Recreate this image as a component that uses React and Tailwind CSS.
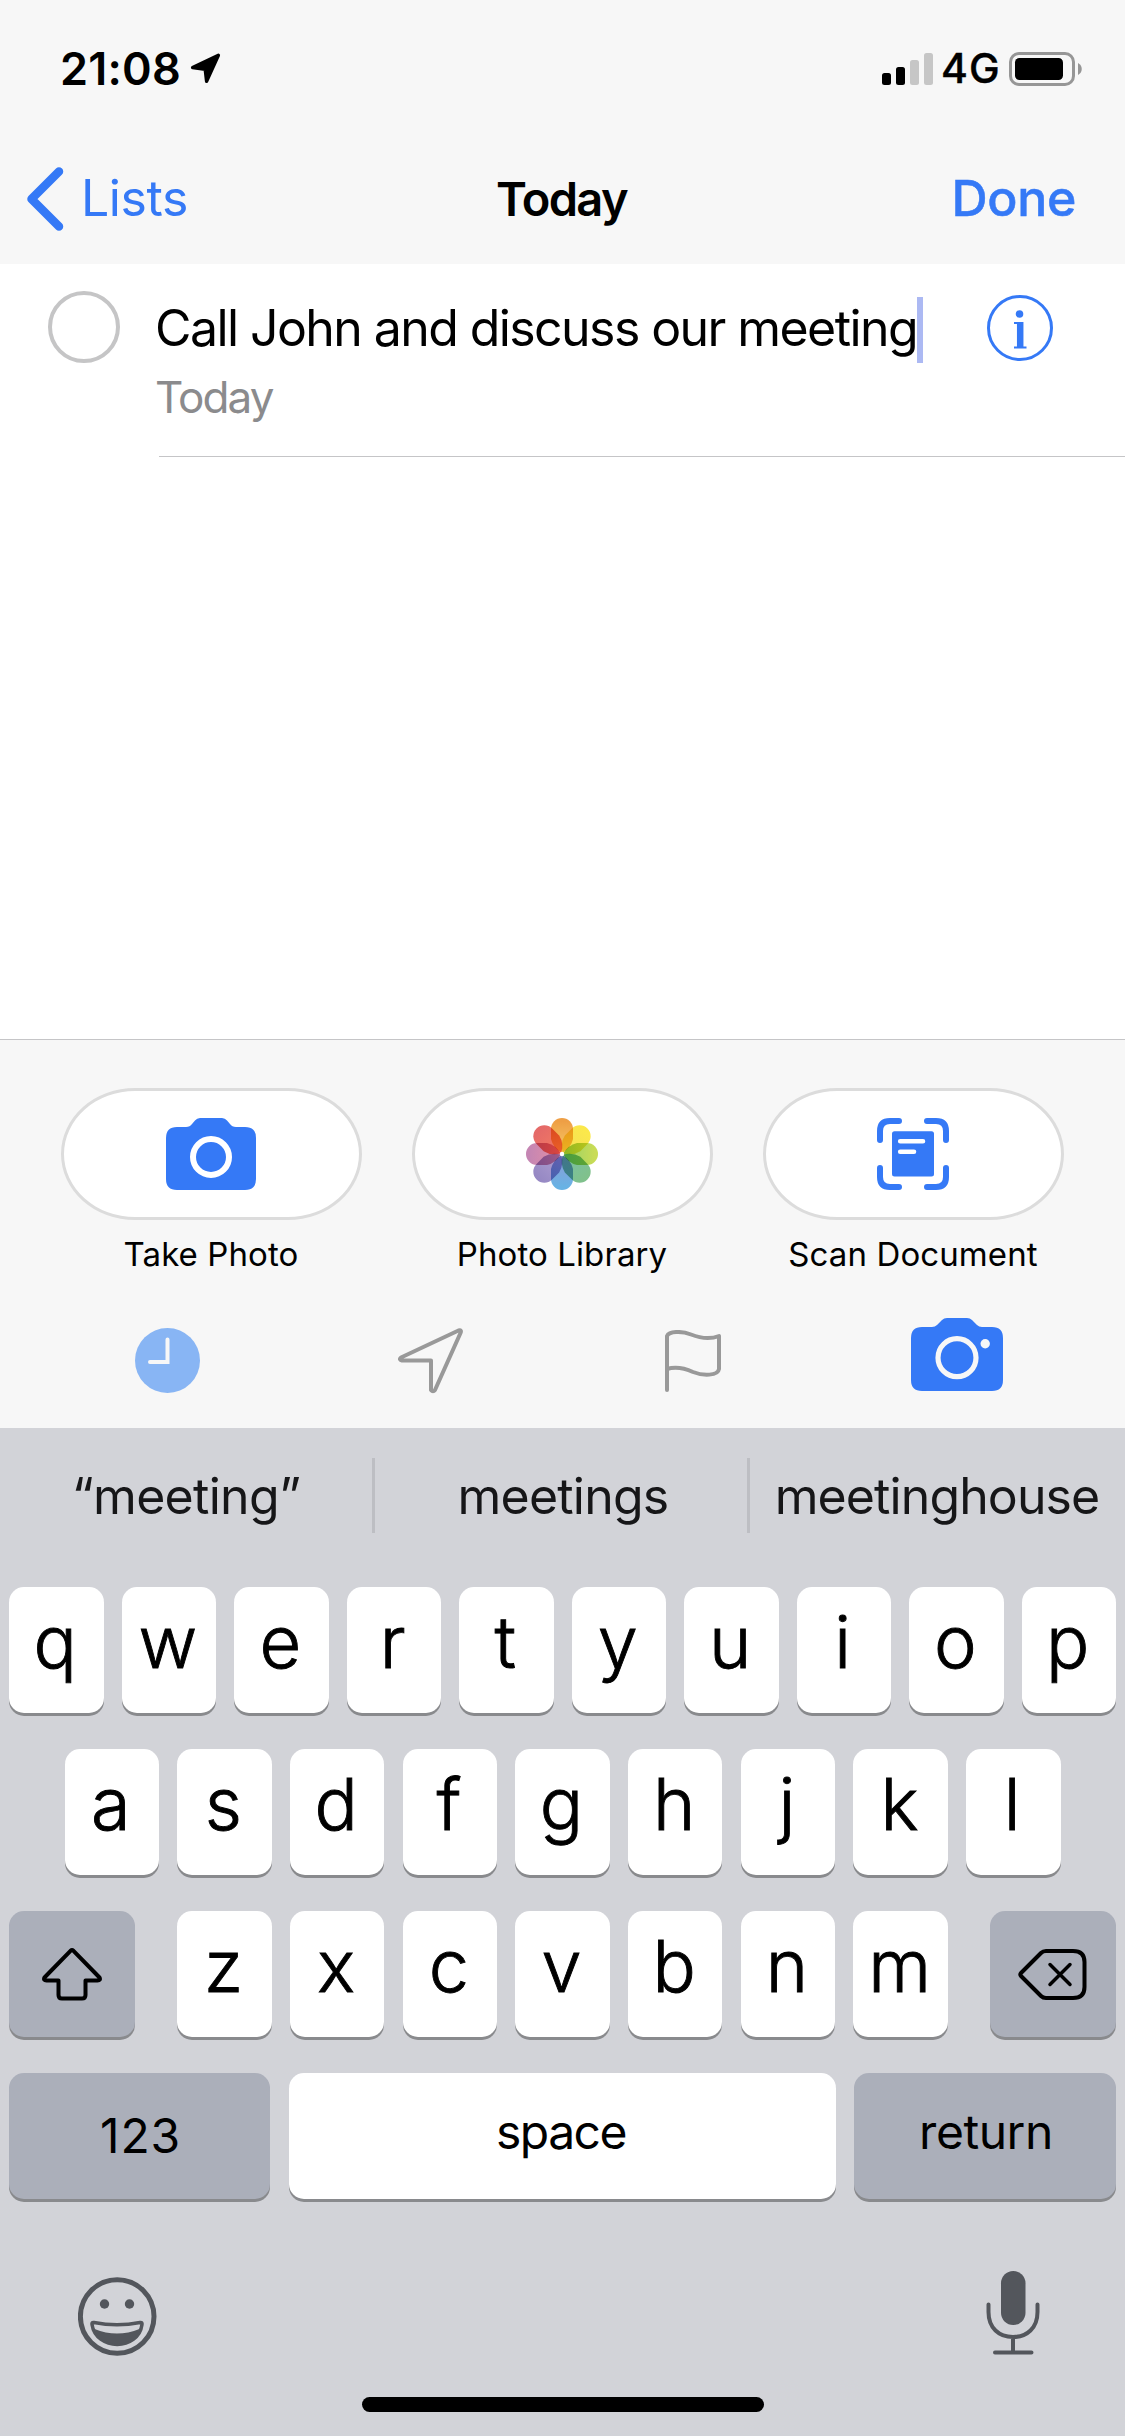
import React from "react";

const PETALS = [
  ["#ee9f45", "#f7cc68"],
  ["#fbe84b", "#f2e058"],
  ["#c9dc56", "#94d068"],
  ["#80c18c", "#78c0a8"],
  ["#68b2e4", "#929ad6"],
  ["#9789c4", "#b0a0d2"],
  ["#c586b3", "#e690a4"],
  ["#e56a68", "#f47c62"],
];

function StatusBar() {
  return (
    <div className="flex h-[132px] items-start">
      <span className="mt-[46px] ml-[60px] w-[120px] text-[45px] leading-none font-semibold tracking-[0.2px]">21:08</span>
      <svg className="mt-[53px] ml-[10px] h-[31px] w-[31px]" viewBox="0 0 31 31">
        <path d="M28.4 2.2 L2.6 14.6 L15.2 16.4 L16.6 28.4 Z" stroke="#000" strokeWidth="3.4" strokeLinejoin="round" />
      </svg>
      <svg className="mt-[53px] ml-auto h-[32px] w-[51px]" viewBox="0 0 51 32">
        <rect x="0" y="20" width="9" height="12" rx="2.5" />
        <rect x="14" y="14" width="9" height="18" rx="2.5" />
        <rect x="28" y="7" width="9" height="25" rx="2.5" fill="#c6c6c6" />
        <rect x="42" y="0" width="9" height="32" rx="2.5" fill="#c6c6c6" />
      </svg>
      <span className="mt-[48px] ml-[8px] w-[59px] text-[41px] leading-none font-medium tracking-[1px] [-webkit-text-stroke:0.4px_#000]">4G</span>
      <svg className="mt-[52px] mr-[43px] ml-[9px] h-[34px] w-[73px]" viewBox="0 0 73 34">
        <rect x="1.5" y="1.5" width="63" height="31" rx="8.5" fill="none" stroke="#969696" strokeWidth="3" />
        <rect x="6" y="6" width="48" height="22" rx="4.5" />
        <path d="M69 11 C74 13.5 74 20.500 69 23 Z" fill="#969696" />
      </svg>
    </div>
  );
}

function NavBar() {
  return (
    <div className="flex h-[132px] items-start">
      <svg className="mt-[34px] ml-[25px] h-[66px] w-[40px]" viewBox="0 0 40 66" fill="none" stroke="#3579f6" strokeWidth="8.500" strokeLinecap="round" strokeLinejoin="round">
        <path d="M34 5.500 L6.500 33 L34 60.500" />
      </svg>
      <span className="mt-[41px] ml-[16px] w-[200px] text-[50px] leading-none tracking-[-0.4px] text-[#3579f6]">Lists</span>
      <span className="mt-[43px] ml-[215px] text-[47px] leading-none font-semibold tracking-[-1.65px]">Today</span>
      <span className="mt-[41px] mr-[49px] ml-auto text-[50px] leading-none font-medium tracking-[-0.3px] text-[#3579f6] [-webkit-text-stroke:0.5px_#3579f6]">Done</span>
    </div>
  );
}

function Reminder() {
  return (
    <div className="flex h-[193px] items-start">
      <div className="mt-[27px] ml-[48px] size-[72px] shrink-0 rounded-full border-[4.500px] border-[#c5c5c6]" />
      <div className="ml-[35px] flex h-[193px] grow flex-col">
        <div className="flex h-[108px] items-start">
          <span className="mt-[39px] w-[762px] text-[50px] leading-none tracking-[-1.58px] whitespace-nowrap">Call John and discuss our meeting</span>
          <div className="mt-[33px] h-[66px] w-[6px] bg-[#acb9f3]" />
          <svg className="mt-[31px] ml-[64px] size-[66px]" viewBox="0 0 66 66" fill="none" stroke="#3579f6">
            <circle cx="33" cy="33" r="31.500" strokeWidth="3" />
            <circle cx="32.500" cy="19" r="3.800" fill="#3579f6" stroke="none" />
            <path d="M33.200 27 V52" strokeWidth="6.500" />
            <path d="M27 28 H35 M27 52.500 H39.500" strokeWidth="2" />
          </svg>
        </div>
        <span className="mt-[3px] text-[44px] leading-none tracking-[-1.9px] text-[#8b8b8d]">Today</span>
        <div className="mt-auto ml-[4px] h-px bg-[#c5c5c7]" />
      </div>
    </div>
  );
}

function Camera() {
  return (
    <svg className="mr-px h-[72px] w-[90px]" viewBox="0 0 90 72">
      <path d="M11 9 H20 Q24 9 26 6 L29 2.500 Q31 0 34 0 H56 Q59 0 61 2.500 L64 6 Q66 9 70 9 H79 Q90 9 90 20 V61 Q90 72 79 72 H11 Q0 72 0 61 V20 Q0 9 11 9 Z" fill="#3579f6" />
      <circle cx="45" cy="39" r="18" fill="none" stroke="#fff" strokeWidth="6" />
    </svg>
  );
}

function Photos() {
  return (
    <svg className="isolate mr-px h-[72px] w-[72px]" viewBox="-36 -36 72 72">
      <defs>
        {PETALS.map(([a, b], i) => (
          <linearGradient key={i} id={"petal" + i} x1="0" y1="0" x2="0" y2="1">
            <stop offset="0.1" stopColor={a} />
            <stop offset="1" stopColor={b} />
          </linearGradient>
        ))}
      </defs>
      {PETALS.map((_, i) => (
        <path key={i} className="mix-blend-multiply" d="M-11 -25 A11 11 0 0 1 11 -25 V-15 Q9 -6 0 -1 Q-9 -6 -11 -15 Z" fill={"url(#petal" + i + ")"} transform={"rotate(" + i * 45 + ")"} />
      ))}
      <circle r="2.200" fill="#fff" />
    </svg>
  );
}

function Scan() {
  return (
    <svg className="mr-px h-[72px] w-[72px]" viewBox="0 0 72 72" fill="none" strokeLinecap="round">
      <path d="M3 22 V13 Q3 3 13 3 H22 M50 3 H59 Q69 3 69 13 V22 M69 50 V59 Q69 69 59 69 H50 M22 69 H13 Q3 69 3 59 V50" stroke="#3579f6" strokeWidth="6" />
      <rect x="15" y="13.300" width="42" height="45.300" rx="2.500" fill="#3579f6" />
      <path d="M23.200 23.200 H46 M23.200 33.700 H37" stroke="#fff" strokeWidth="4.600" />
    </svg>
  );
}

function Attachments() {
  const items = [["Take Photo", Camera], ["Photo Library", Photos], ["Scan Document", Scan]];
  return (
    <div className="flex h-[217px] items-start justify-between px-[61px] pt-[48px]">
      {items.map(([label, Icon]) => (
        <div key={label} className="flex w-[301px] flex-col items-center">
          <div className="flex h-[132px] w-full shrink-0 items-center justify-center rounded-[74px/66px] border-3 border-[#dcdcdc] bg-white">
            <Icon />
          </div>
          <span className="mt-[18px] mr-px text-[33px] leading-none tracking-[0.1px] whitespace-nowrap">{label}</span>
        </div>
      ))}
    </div>
  );
}

function QuickBar() {
  return (
    <div className="flex h-[171px] items-start">
      <svg className="mt-[71px] ml-[135px] size-[65px]" viewBox="0 0 65 65">
        <circle cx="32.500" cy="32.500" r="32.500" fill="#88b5f4" />
        <path d="M32.500 11.500 V34 H15" fill="none" stroke="#f7f7f7" strokeWidth="4" strokeLinecap="round" />
      </svg>
      <svg className="mt-[71px] ml-[198px] size-[66px]" viewBox="0 0 66 66" fill="none" stroke="#999" strokeWidth="4" strokeLinejoin="round">
        <path d="M60.500 2.500 Q64 1.500 62.500 5 L37 62 Q35 64.500 33 62 V32.500 L4 32.500 Q0.500 31.500 3 29.500 Z" />
      </svg>
      <svg className="mt-[73px] ml-[201px] h-[62px] w-[57px]" viewBox="0 0 57 62" fill="none" stroke="#999" strokeWidth="4" strokeLinejoin="round" strokeLinecap="round">
        <path d="M2 60 V6 C4 1.500 16 0.500 26 4.500 C36 8.500 45 9.500 54 6 V39 C53 46 38 46 28 42 C18 37.500 9 37 2 39" />
      </svg>
      <svg className="mt-[61px] ml-[189px] h-[73px] w-[92px]" viewBox="0 0 92 73">
        <path d="M11 9 H21 Q24 9 26 7 L31 2 Q33 0 36 0 H56 Q59 0 61 2 L66 7 Q68 9 71 9 H81 Q92 9 92 20 V62 Q92 73 81 73 H11 Q0 73 0 62 V20 Q0 9 11 9 Z" fill="#3579f6" />
        <circle cx="46" cy="39.700" r="19" fill="none" stroke="#f7f7f7" strokeWidth="5.200" />
        <circle cx="74.200" cy="25.700" r="4.700" fill="#f7f7f7" />
      </svg>
    </div>
  );
}

function Suggestions() {
  const cell = "flex h-[75px] w-[372px] justify-center pt-[13px] text-[50px] leading-none text-[#161618]";
  return (
    <div className="flex h-[159px] pt-[30px]">
      <span className={cell + " tracking-[-0.7px]"}>“meeting”</span>
      <div className="h-[75px] w-[3px] bg-[#bdbec3]" />
      <span className={cell + " pl-[4px] tracking-[-0.8px]"}>meetings</span>
      <div className="h-[75px] w-[3px] bg-[#bdbec3]" />
      <span className={cell + " pl-[2px] tracking-[-0.9px]"}>meetinghouse</span>
    </div>
  );
}

function Key({ children, className = "w-[94.500px] bg-white" }) {
  return (
    <div className={"flex h-[126px] shrink-0 justify-center rounded-[15px] shadow-[0_3px_0_#898a8d] " + className}>
      {children}
    </div>
  );
}

function Letters({ keys }) {
  return keys.split("").map((k) => (
    <Key key={k}>
      <span className="mt-[19px] mr-[2px] text-[72px] leading-none font-light [-webkit-text-stroke:0.9px_#000]">{k}</span>
    </Key>
  ));
}

function Keyboard() {
  return (
    <div className="flex h-[1008px] flex-col bg-[#d2d3d8]">
      <Suggestions />
      <div className="flex flex-col gap-[36px] px-[9px]">
        <div className="flex justify-center gap-[18px]"><Letters keys="qwertyuiop" /></div>
        <div className="flex justify-center gap-[18.200px]"><Letters keys="asdfghjkl" /></div>
        <div className="flex justify-between">
          <Key className="w-[126px] items-center bg-[#abafba]">
            <svg className="h-[53px] w-[60px]" viewBox="0 0 60 53" fill="none" stroke="#000" strokeWidth="4" strokeLinejoin="round">
              <path d="M28.500 2.800 Q30 1.500 31.500 2.800 L57.500 29.500 Q59 32.500 55.500 32.500 H43.500 V47 Q43.500 50.500 40 50.500 H20 Q16.500 50.500 16.500 47 V32.500 H4.500 Q1 32.500 2.500 29.500 Z" />
            </svg>
          </Key>
          <div className="flex gap-[18.200px]"><Letters keys="zxcvbnm" /></div>
          <Key className="w-[126px] items-center bg-[#abafba]">
            <svg className="ml-[-2px] h-[51px] w-[69px]" viewBox="0 0 69 51" fill="none" stroke="#000" strokeWidth="4" strokeLinejoin="round" strokeLinecap="round">
              <path d="M28 2 H55 Q66.500 2 66.500 13 V38 Q66.500 49 55 49 H28 Q25 49 23 47 L3 27 Q1.500 25.500 3 24 L23 4 Q25 2 28 2 Z" />
              <path d="M32 15.500 L52 35.500 M52 15.500 L32 35.500" strokeWidth="3.500" />
            </svg>
          </Key>
        </div>
        <div className="flex justify-between">
          <Key className="w-[261px] bg-[#abafba]"><span className="mt-[39px] ml-[2px] text-[48px] leading-none tracking-[0.8px]">123</span></Key>
          <Key className="w-[547px] bg-white"><span className="mt-[35px] mr-[2px] text-[48px] leading-none tracking-[-1.5px]">space</span></Key>
          <Key className="w-[262px] bg-[#abafba]"><span className="mt-[35px] ml-[2px] text-[48px] leading-none tracking-[-0.45px]">return</span></Key>
        </div>
      </div>
      <div className="flex h-[198px] items-start justify-between pr-[85px] pl-[78px]">
        <svg className="mt-[78px] size-[79px]" viewBox="0 0 79 79" fill="none" stroke="#53565c">
          <circle cx="39.200" cy="39.500" r="36.800" strokeWidth="5" />
          <circle cx="26.500" cy="27" r="4.700" fill="#53565c" stroke="none" />
          <circle cx="51.500" cy="27" r="4.700" fill="#53565c" stroke="none" />
          <path d="M16 45.500 Q13.500 45 14 47.500 C18 74 60.500 74 64 47.500 Q64.500 45 62 45.500 Q39 50 16 45.500 Z" strokeWidth="3.500" strokeLinejoin="round" />
          <path d="M16.500 52 Q39 61 61.500 52 C56 71.500 22.500 71.500 16.500 52 Z" fill="#53565c" stroke="none" />
        </svg>
        <svg className="mt-[72px] h-[84px] w-[54px]" viewBox="0 0 54 84" fill="none" stroke="#53565c" strokeWidth="4" strokeLinecap="round">
          <rect x="15" y="0" width="24.500" height="54" rx="12.250" fill="#53565c" stroke="none" />
          <path d="M2.500 33.500 V41 C2.500 57 13 66 27 66 C41 66 51.500 57 51.500 41 V33.500 M27 66 V81 M9 81.500 H45.500" />
        </svg>
      </div>
      <div className="mx-auto h-[15px] w-[402px] rounded-full bg-black" />
    </div>
  );
}

export default function App() {
  return (
    <div className="flex h-[2436px] w-[1125px] flex-col overflow-hidden bg-white font-['Inter',sans-serif] text-black">
      <div className="h-[264px] bg-[#f7f7f7]">
        <StatusBar />
        <NavBar />
      </div>
      <div className="h-[775px]">
        <Reminder />
      </div>
      <div className="h-[389px] border-t border-[#c5c5c7] bg-[#f7f7f7]">
        <Attachments />
        <QuickBar />
      </div>
      <Keyboard />
    </div>
  );
}
